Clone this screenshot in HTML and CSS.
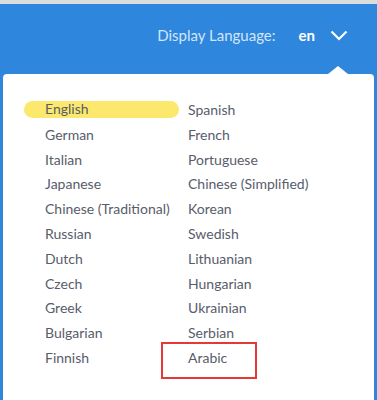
FILE: index.html
```html
<!DOCTYPE html>
<html lang="en">
  <head>
    <meta charset="utf-8" />
    <meta name="viewport" content="width=device-width, initial-scale=1" />
    <title>Display Language</title>
    <link rel="stylesheet" href="styles.css">
  </head>
  <body>
    <!--Header-->
    <div class="topbar">
      <span class="topbar-label">Display Language:</span>
      <span class="topbar-current">en</span>
      <svg class="topbar-chevron" width="18" height="11" viewBox="0 0 18 11">
        <path d="M1.5 1.5L9 9l7.5-7.5" fill="none" stroke="#fff" stroke-width="2.2"></path>
      </svg>
    </div>

    <!--Dropdown-->
    <div class="lang-panel">
      <div class="lang-list">
        <ul class="lang-col lang-col-left">
          <li class="lang is-current">English</li>
          <li class="lang">German</li>
          <li class="lang">Italian</li>
          <li class="lang">Japanese</li>
          <li class="lang">Chinese (Traditional)</li>
          <li class="lang">Russian</li>
          <li class="lang">Dutch</li>
          <li class="lang">Czech</li>
          <li class="lang">Greek</li>
          <li class="lang">Bulgarian</li>
          <li class="lang">Finnish</li>
        </ul>
        <ul class="lang-col">
          <li class="lang">Spanish</li>
          <li class="lang">French</li>
          <li class="lang">Portuguese</li>
          <li class="lang">Chinese (Simplified)</li>
          <li class="lang">Korean</li>
          <li class="lang">Swedish</li>
          <li class="lang">Lithuanian</li>
          <li class="lang">Hungarian</li>
          <li class="lang">Ukrainian</li>
          <li class="lang">Serbian</li>
          <li class="lang is-marked">Arabic</li>
        </ul>
      </div>
    </div>
  </body>
</html>
```

FILE: styles.css
```css
body {
  margin: 0;
  height: 400px;
  overflow: hidden;
  background-color: #2f86dd;
  border-top: 4px solid #dcdcdc;
  font-family: Lato, "Liberation Sans", sans-serif;
}
.topbar {
  height: 62px;
  display: flex;
  align-items: center;
  justify-content: flex-end;
  padding: 0 29px 8px 0;
}
.topbar-label {
  color: #d3e5fa;
  font-size: 15px;
  margin-right: 23px;
}
.topbar-current {
  color: #ffffff;
  font-size: 15px;
  font-weight: 700;
  margin-right: 15px;
}
.topbar-chevron {
  display: block;
}
.lang-panel {
  position: relative;
  margin: 0 3px;
  height: 340px;
  background-color: #ffffff;
  border-radius: 4px;
}
/* notch under the chevron */
.lang-panel::before {
  content: "";
  position: absolute;
  top: -8px;
  right: 26px;
  border-left: 10px solid transparent;
  border-right: 10px solid transparent;
  border-bottom: 8px solid #ffffff;
}
.lang-list {
  display: flex;
  padding: 24px 0 0 42px;
}
.lang-col {
  list-style: none;
  margin: 0;
  padding: 0;
}
.lang-col-left {
  width: 143px;
}
.lang {
  color: #585c6b;
  font-size: 14px;
  line-height: 24.8px;
  white-space: nowrap;
}
.lang.is-current {
  line-height: 16.8px;
  margin: 3px 9px 5px -21px;
  padding-left: 21px;
  background-color: #fbe86c;
  border-radius: 9px;
}
.lang.is-marked {
  width: 67px;
  margin: -4px 0 0 -27px;
  padding: 2px 0 6.6px 25px;
  border: 2px solid #e53935;
}
```
